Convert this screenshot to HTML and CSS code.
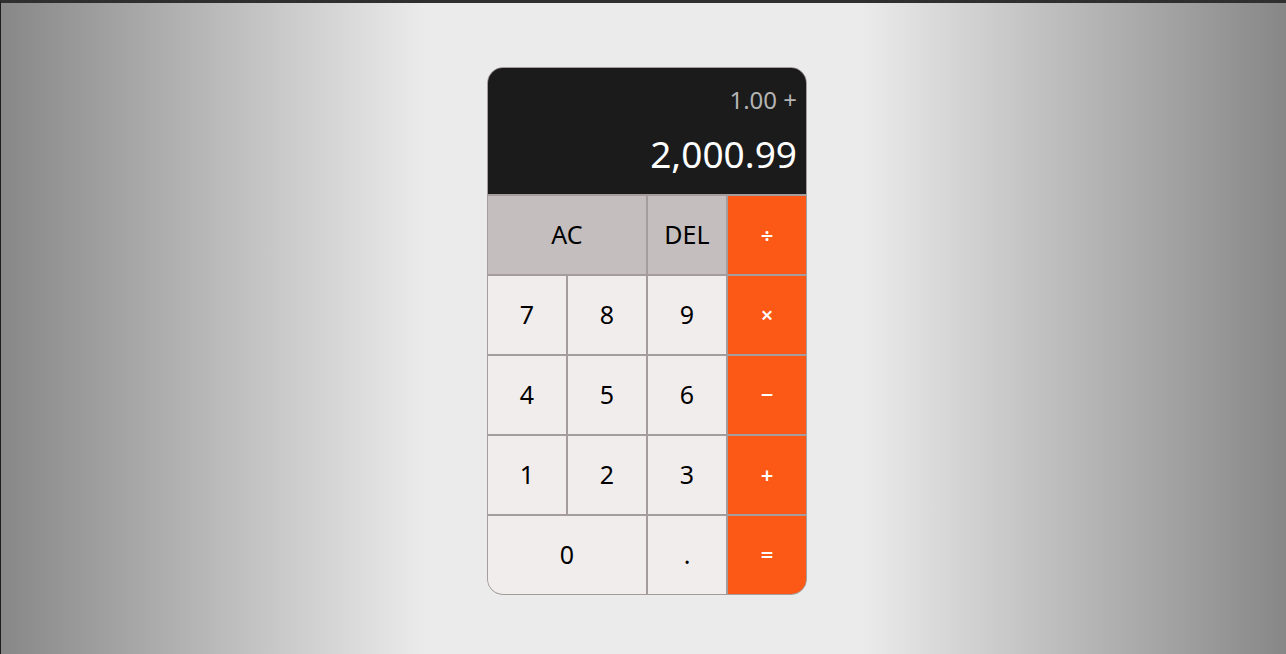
FILE: index.html
```html
<!DOCTYPE html>
<html lang="en">
<head>
<meta charset="utf-8">
<title>Calculator</title>
<link rel="stylesheet" href="styles.css">
</head>
<body>
<main class="page">
  <div class="calculator">
    <div class="display">
      <div class="previous">1.00 +</div>
      <div class="current">2,000.99</div>
    </div>
    <button class="key key-fn span-2">AC</button>
    <button class="key key-fn">DEL</button>
    <button class="key key-op">÷</button>
    <button class="key">7</button>
    <button class="key">8</button>
    <button class="key">9</button>
    <button class="key key-op">×</button>
    <button class="key">4</button>
    <button class="key">5</button>
    <button class="key">6</button>
    <button class="key key-op">−</button>
    <button class="key">1</button>
    <button class="key">2</button>
    <button class="key">3</button>
    <button class="key key-op">+</button>
    <button class="key span-2">0</button>
    <button class="key">.</button>
    <button class="key key-op">=</button>
  </div>
</main>
</body>
</html>
```
FILE: styles.css
```css
html, body {
  margin: 0;
  padding: 0;
}

body {
  height: 654px;
  box-sizing: border-box;
  border-top: 3px solid #2f2f2f;
  border-left: 1px solid #1e1e1e;
  background: linear-gradient(to right, #878787 0%, #ebebeb 33%, #ebebeb 67%, #878787 100%);
  font-family: "Noto Sans", "Open Sans", sans-serif;
  overflow: hidden;
}

.page {
  display: flex;
  justify-content: center;
  padding-top: 64px;
  padding-left: 7px;
}

.calculator {
  display: grid;
  grid-template-columns: repeat(4, 78px);
  grid-template-rows: 126px repeat(5, 78px);
  gap: 2px;
  border: 1px solid #a59d9d;
  background: #a59d9d;
  border-radius: 16px;
  overflow: hidden;
}

.display {
  grid-column: 1 / -1;
  background: #1b1b1b;
  display: flex;
  flex-direction: column;
  align-items: flex-end;
  justify-content: flex-end;
  gap: 12px;
  padding: 0 9px 15px;
}

.previous {
  color: #b4b4b4;
  font-size: 24px;
}

.current {
  color: #ffffff;
  font-size: 37px;
}

.key {
  border: 0;
  margin: 0;
  padding: 0 0 3px;
  background: #f2eded;
  color: #000;
  font-family: "Noto Sans", "Open Sans", sans-serif;
  font-size: 25px;
  cursor: pointer;
}

.key-fn {
  background: #c4bebe;
}

.key-op {
  background: #fd5916;
  color: #fff;
  font-size: 22px;
  font-weight: 600;
}

.span-2 {
  grid-column: span 2;
}
```
